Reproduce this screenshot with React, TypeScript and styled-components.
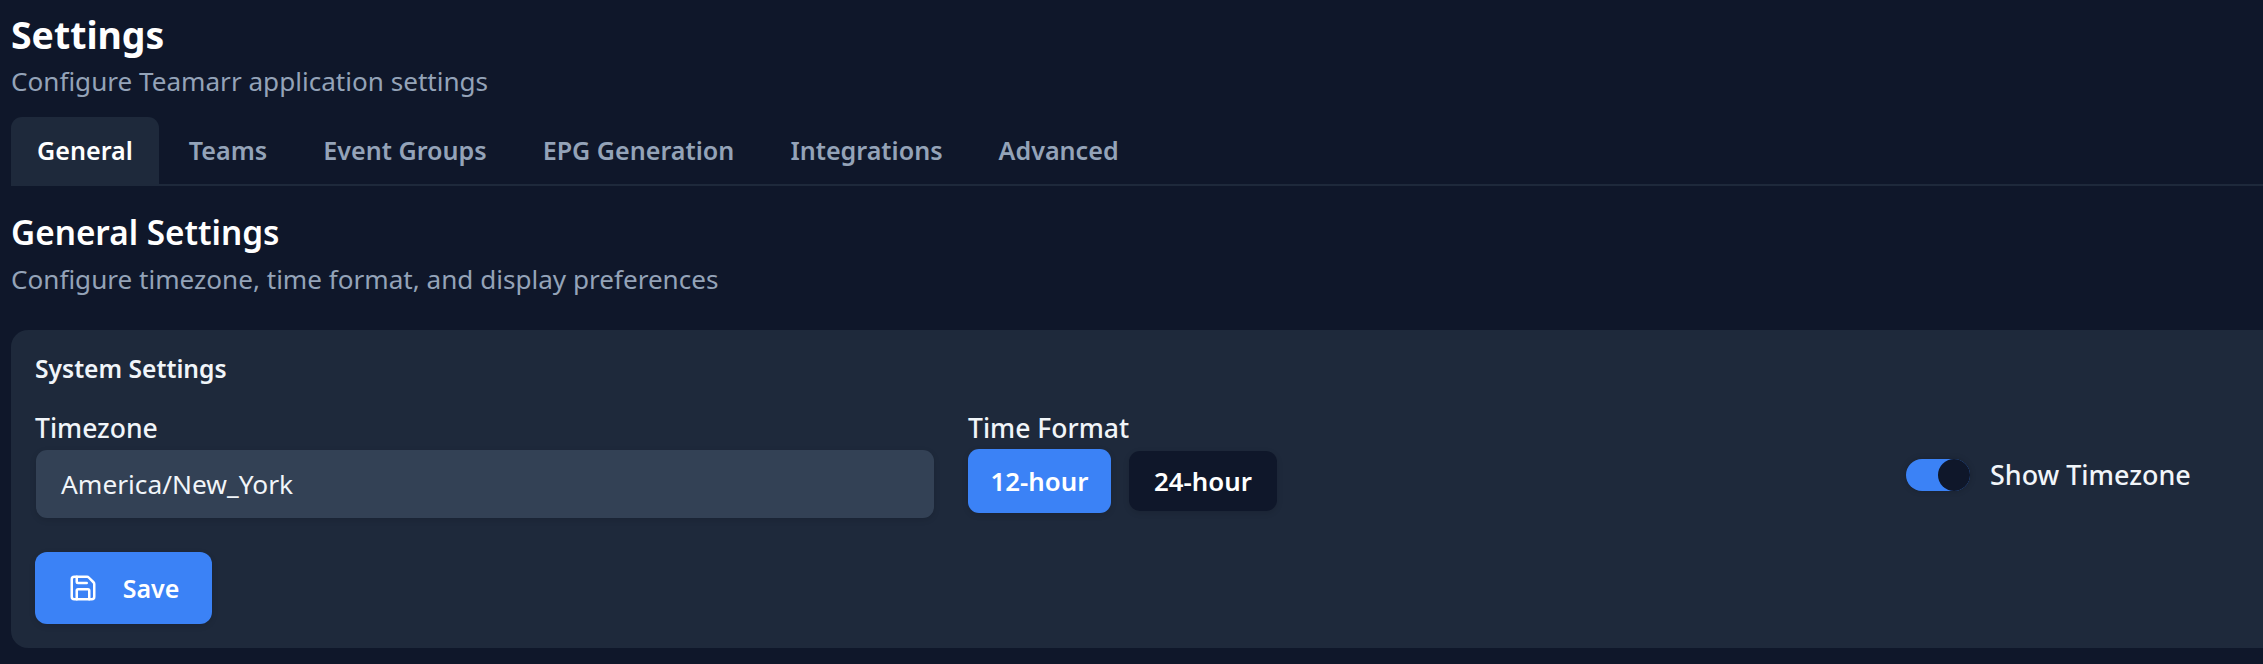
import React from 'react'
import styled, { createGlobalStyle } from 'styled-components'
import { Save } from 'lucide-react'

const GlobalStyle = createGlobalStyle`
    html, body {
        margin: 0;
        height: 100%;
        overflow: hidden;
        background: #0f172a;
    }
    body {
        font-family: 'Noto Sans', 'Open Sans', sans-serif;
        color: #f1f5f9;
    }
`

const tabs = ['General', 'Teams', 'Event Groups', 'EPG Generation', 'Integrations', 'Advanced']

const App: React.FunctionComponent = () => {
    return (
        <Page>
            <GlobalStyle />
            <Title>Settings</Title>
            <Subtitle>Configure Teamarr application settings</Subtitle>
            <TabBar>
                {tabs.map((tab, i) => (
                    <Tab key={tab} $active={i === 0}>
                        {tab}
                    </Tab>
                ))}
            </TabBar>
            <SectionTitle>General Settings</SectionTitle>
            <SectionText>Configure timezone, time format, and display preferences</SectionText>
            <Card>
                <CardTitle>System Settings</CardTitle>
                <FieldGrid>
                    <Field>
                        <Label>Timezone</Label>
                        <Input>America/New_York</Input>
                    </Field>
                    <Field>
                        <Label>Time Format</Label>
                        <FormatRow>
                            <FormatButton $active>12-hour</FormatButton>
                            <FormatButton>24-hour</FormatButton>
                        </FormatRow>
                    </Field>
                    <ToggleField>
                        <Toggle>
                            <Knob />
                        </Toggle>
                        <ToggleLabel>Show Timezone</ToggleLabel>
                    </ToggleField>
                </FieldGrid>
                <SaveButton>
                    <Save size={30} strokeWidth={2} />
                    Save
                </SaveButton>
            </Card>
        </Page>
    )
}

const Page = styled.div`
    width: 2900px;
    padding: 0 0 0 11px;
    box-sizing: border-box;
`

const Title = styled.h1`
    margin: 0;
    padding-top: 11px;
    font-size: 37.4px;
    line-height: 48px;
    font-weight: 700;
    color: #ffffff;
`

const Subtitle = styled.p`
    margin: 5px 0 0;
    font-size: 26.1px;
    line-height: 34px;
    color: #94a3b8;
`

const TabBar = styled.div`
    display: flex;
    gap: 4px;
    margin-top: 19px;
    border-bottom: 2px solid #1e293b;
`

const Tab = styled.div<{ $active?: boolean }>`
    height: 67px;
    padding: 0 26px 2px;
    box-sizing: border-box;
    display: flex;
    align-items: center;
    font-size: 25.12px;
    font-weight: 600;
    border-radius: 11px 11px 0 0;
    color: ${(p) => (p.$active ? '#ffffff' : '#94a3b8')};
    background: ${(p) => (p.$active ? '#1e293b' : 'transparent')};
`

const SectionTitle = styled.h2`
    margin: 24px 0 0;
    font-size: 33.3px;
    line-height: 44px;
    font-weight: 600;
    color: #ffffff;
`

const SectionText = styled.p`
    margin: 8px 0 0;
    font-size: 26.1px;
    line-height: 34px;
    color: #94a3b8;
`

const Card = styled.section`
    margin-top: 34px;
    width: 2860px;
    height: 318px;
    box-sizing: border-box;
    padding: 22px 24px;
    background: #1e293b;
    border-radius: 17px;
`

const CardTitle = styled.h3`
    margin: 0;
    font-size: 24.6px;
    line-height: 34px;
    font-weight: 600;
    color: #f1f5f9;
`

const FieldGrid = styled.div`
    display: grid;
    grid-template-columns: repeat(3, 899px);
    column-gap: 34px;
    margin-top: 25px;
`

const Field = styled.div`
    display: flex;
    flex-direction: column;
`

const Label = styled.label`
    font-size: 26.5px;
    line-height: 34px;
    font-weight: 500;
    color: #f1f5f9;
`

const Input = styled.div`
    height: 68px;
    margin-top: 5px;
    margin-left: 1px;
    padding: 0 25px;
    display: flex;
    align-items: center;
    box-sizing: border-box;
    font-size: 26.3px;
    color: #f1f5f9;
    background: #334155;
    border-radius: 11px;
    box-shadow: 0 2px 6px rgba(0, 0, 0, 0.12);
`

const FormatRow = styled.div`
    display: flex;
    align-items: center;
    gap: 18px;
    margin-top: 4px;
`

const FormatButton = styled.div<{ $active?: boolean }>`
    height: ${(p) => (p.$active ? '64px' : '60px')};
    width: ${(p) => (p.$active ? '143px' : '148px')};
    display: flex;
    align-items: center;
    justify-content: center;
    font-size: 25.8px;
    font-weight: 600;
    color: #ffffff;
    background: ${(p) => (p.$active ? '#3b82f6' : '#0f172a')};
    border-radius: 11px;
    box-shadow: 0 2px 6px rgba(0, 0, 0, 0.12);
`

const ToggleField = styled.div`
    display: flex;
    align-items: center;
    align-self: start;
    gap: 20px;
    margin-top: 47px;
    margin-left: 5px;
`

const Toggle = styled.div`
    width: 64px;
    height: 32px;
    border-radius: 16px;
    background: #3b82f6;
    display: flex;
    justify-content: flex-end;
    box-shadow: 0 0 6px rgba(0, 0, 0, 0.2);
`

const Knob = styled.span`
    width: 32px;
    height: 32px;
    border-radius: 50%;
    background: #0f172a;
`

const ToggleLabel = styled.span`
    font-size: 26.9px;
    font-weight: 500;
    line-height: 34px;
    color: #f1f5f9;
`

const SaveButton = styled.button`
    margin-top: 34px;
    width: 177px;
    height: 72px;
    border: 0;
    display: flex;
    align-items: center;
    justify-content: center;
    gap: 25px;
    font-family: inherit;
    font-size: 25px;
    font-weight: 600;
    color: #ffffff;
    background: #3b82f6;
    border-radius: 12px;
    box-shadow: 0 2px 6px rgba(0, 0, 0, 0.12);
`

export default App
